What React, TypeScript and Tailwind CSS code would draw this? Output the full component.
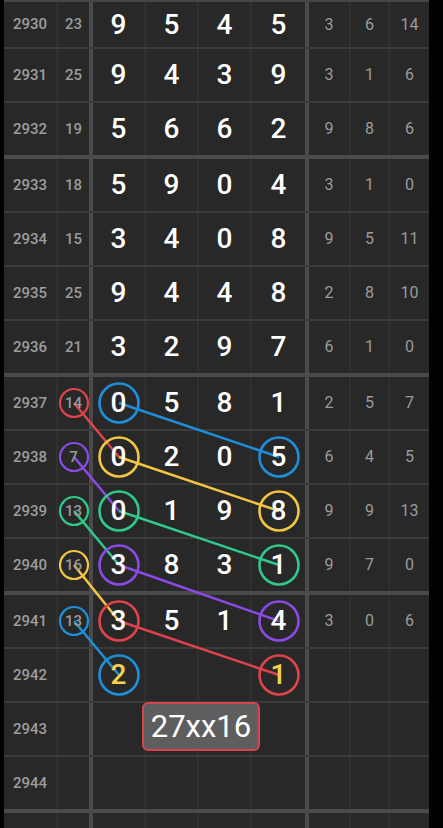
import React from 'react';

type Row = {
  period: string;
  sum?: string;
  digits: string[];
  tail: string[];
  height?: string;
  groupEnd?: boolean;
};

const rows: Row[] = [
  { period: '2930', sum: '23', digits: ['9', '5', '4', '5'], tail: ['3', '6', '14'], height: 'h-[47px]' },
  { period: '2931', sum: '25', digits: ['9', '4', '3', '9'], tail: ['3', '1', '6'] },
  { period: '2932', sum: '19', digits: ['5', '6', '6', '2'], tail: ['9', '8', '6'], groupEnd: true },
  { period: '2933', sum: '18', digits: ['5', '9', '0', '4'], tail: ['3', '1', '0'] },
  { period: '2934', sum: '15', digits: ['3', '4', '0', '8'], tail: ['9', '5', '11'] },
  { period: '2935', sum: '25', digits: ['9', '4', '4', '8'], tail: ['2', '8', '10'] },
  { period: '2936', sum: '21', digits: ['3', '2', '9', '7'], tail: ['6', '1', '0'], groupEnd: true },
  { period: '2937', sum: '14', digits: ['0', '5', '8', '1'], tail: ['2', '5', '7'] },
  { period: '2938', sum: '7', digits: ['0', '2', '0', '5'], tail: ['6', '4', '5'] },
  { period: '2939', sum: '13', digits: ['0', '1', '9', '8'], tail: ['9', '9', '13'] },
  { period: '2940', sum: '16', digits: ['3', '8', '3', '1'], tail: ['9', '7', '0'], groupEnd: true },
  { period: '2941', sum: '13', digits: ['3', '5', '1', '4'], tail: ['3', '0', '6'] },
  { period: '2942', digits: ['2', '', '', '1'], tail: ['', '', ''] },
  { period: '2943', digits: ['', '', '', ''], tail: ['', '', ''] },
  { period: '2944', digits: ['', '', '', ''], tail: ['', '', ''], groupEnd: true },
  { period: '', digits: ['', '', '', ''], tail: ['', '', ''] },
];

const BLUE = '#1e8fd8';
const YELLOW = '#f2c542';
const GREEN = '#2fc98a';
const PURPLE = '#8a4ae6';
const RED = '#e0434b';

// row centres (px) for the marked rows
const y = { a: 403, b: 457, c: 511, d: 565, e: 621, f: 675 };
const X_SUM = 74;
const X_FIRST = 119;
const X_LAST = 279;

const bigLinks = [
  { from: y.a, to: y.b, color: BLUE },
  { from: y.b, to: y.c, color: YELLOW },
  { from: y.c, to: y.d, color: GREEN },
  { from: y.d, to: y.e, color: PURPLE },
  { from: y.e, to: y.f, color: RED },
];

const smallLinks = [
  { from: y.a, to: y.b, color: RED },
  { from: y.b, to: y.c, color: PURPLE },
  { from: y.c, to: y.d, color: GREEN },
  { from: y.d, to: y.e, color: YELLOW },
  { from: y.e, to: y.f, color: BLUE },
];

const Overlay = () => (
  <svg
    className="absolute left-[-4px] top-0 pointer-events-none"
    width={443}
    height={828}
    viewBox="0 0 443 828"
  >
    {smallLinks.map((l, i) => (
      <line
        key={`sl${i}`}
        x1={X_SUM}
        y1={l.from}
        x2={X_FIRST}
        y2={l.to}
        stroke={l.color}
        strokeWidth={2.5}
      />
    ))}
    {bigLinks.map((l, i) => (
      <line
        key={`bl${i}`}
        x1={X_FIRST}
        y1={l.from}
        x2={X_LAST}
        y2={l.to}
        stroke={l.color}
        strokeWidth={2.5}
      />
    ))}
    {smallLinks.map((l, i) => (
      <circle key={`sc${i}`} cx={X_SUM} cy={l.from} r={14} fill="none" stroke={l.color} strokeWidth={2.2} />
    ))}
    {[BLUE, YELLOW, GREEN, PURPLE, RED, BLUE].map((c, i) => (
      <circle
        key={`fc${i}`}
        cx={X_FIRST}
        cy={[y.a, y.b, y.c, y.d, y.e, y.f][i]}
        r={19.5}
        fill="none"
        stroke={c}
        strokeWidth={2.6}
      />
    ))}
    {bigLinks.map((l, i) => (
      <circle key={`lc${i}`} cx={X_LAST} cy={l.to} r={19.5} fill="none" stroke={l.color} strokeWidth={2.6} />
    ))}
  </svg>
);

const App = () => {
  return (
    <div className="relative w-[443px] h-[828px] overflow-hidden bg-black font-['Roboto',sans-serif]">
      <div className="relative ml-[4px] w-[425px]">
        <div className="h-[2px] bg-[#454545]" />
        {rows.map((row, idx) => (
          <div
            key={idx}
            className={`flex bg-[#282828] ${row.height ?? (row.groupEnd ? 'h-[56px]' : 'h-[54px]')} ${
              row.groupEnd ? 'border-b-4 border-[#4a4a4a]' : 'border-b-2 border-[#3b3b3b]'
            }`}
          >
            <div className="w-[54px] h-full flex items-center justify-center border-r-2 border-[#303030] text-[15px] font-medium text-[#9d9d9d]">
              {row.period}
            </div>
            <div className="w-[35px] h-full flex items-center justify-center border-r-4 border-[#4a4a4a] text-[15px] font-medium text-[#9a9a9a]">
              <span className="relative z-10">{row.sum}</span>
            </div>
            {row.digits.map((d, i) => (
              <div
                key={i}
                className={`h-full flex items-center justify-center text-[28px] font-medium leading-none ${
                  i === 3 ? 'w-[57px] border-r-4 border-[#4a4a4a]' : 'w-[53px] border-r-2 border-[#303030]'
                } ${row.period === '2942' ? 'text-[#f5d24c]' : 'text-white'}`}
              >
                <span className="relative z-10">{d}</span>
              </div>
            ))}
            {row.tail.map((t, i) => (
              <div
                key={i}
                className={`h-full flex items-center justify-center text-[16px] text-[#9b9b9b] ${
                  i === 0 ? 'w-[42px] border-r-2 border-[#303030]' : i === 1 ? 'w-[39px] border-r-2 border-[#303030]' : 'w-[39px]'
                }`}
              >
                {t}
              </div>
            ))}
          </div>
        ))}
        <Overlay />
        <div className="absolute left-[138px] top-[702px] w-[118px] h-[49px] flex items-center justify-center rounded-[6px] border-2 border-[#d9434b] bg-[#5e5e5e] text-[31px] leading-none text-white">
          27xx16
        </div>
      </div>
    </div>
  );
};

export default App;
